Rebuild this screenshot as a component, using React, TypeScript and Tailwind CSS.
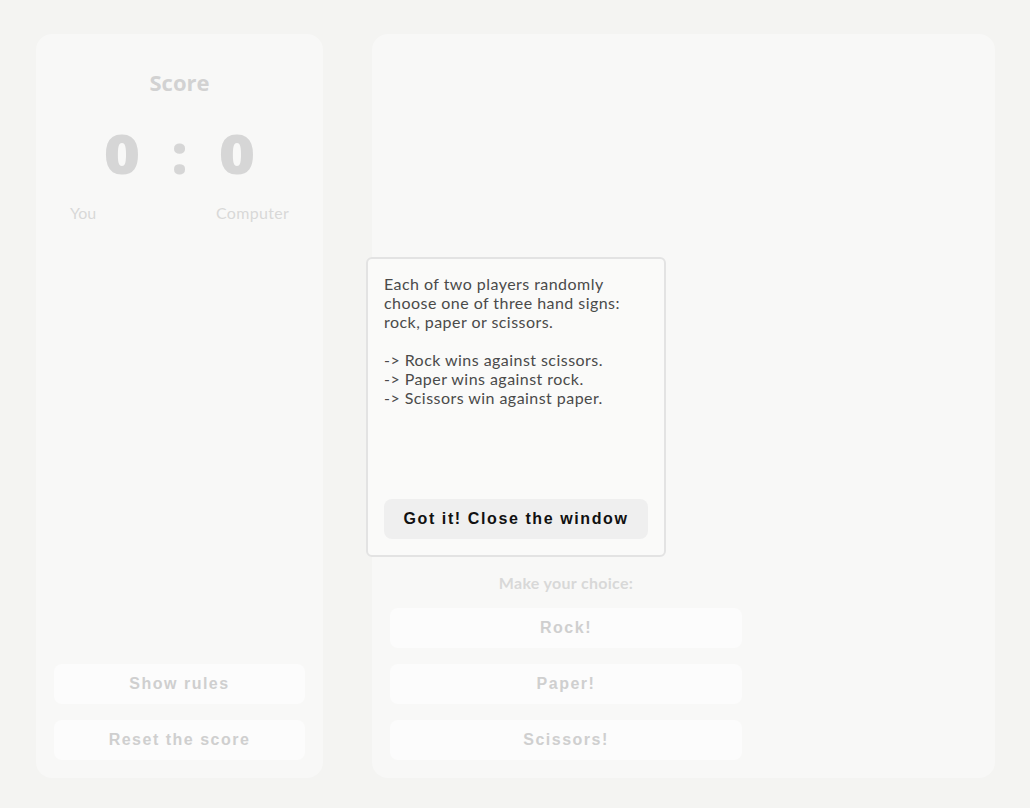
import React from "react";

const btnText = "font-['Liberation_Sans',Arial,sans-serif] font-bold text-[16px] tracking-[1.5px] text-[#cfcfcf]";

function GhostButton({ label }: { label: string }) {
  return (
    <div className={`h-10 rounded-lg bg-[#fcfcfc] flex items-center justify-center ${btnText}`}>
      {label}
    </div>
  );
}

export default function App() {
  return (
    <div className="relative w-[1030px] h-[808px] bg-[#f4f4f2] overflow-hidden">
      <div className="flex h-full pl-[36px] pr-[35px] pt-[34px] pb-[30px] gap-[49px]">
        {/* Left panel */}
        <div className="w-[287px] rounded-2xl bg-[#f8f8f7] flex flex-col px-[18px] pb-[18px]">
          <div className="pt-[34px] text-center font-['Open_Sans',sans-serif] font-bold text-[22px] leading-[28px] text-[#d2d2d2]">
            Score
          </div>
          <div className="mt-[22px] flex justify-center items-center gap-[34px] font-['Open_Sans',sans-serif] font-extrabold text-[54px] leading-[70px] text-[#d6d6d6]">
            <span className="inline-block scale-x-[1.15]">0</span>
            <span>:</span>
            <span className="inline-block scale-x-[1.15]">0</span>
          </div>
          <div className="mt-[15px] flex justify-between px-[16px] font-['Lato',sans-serif] text-[16px] leading-[20px] text-[#d8d8d8]">
            <span>You</span>
            <span className="tracking-[0.3px]">Computer</span>
          </div>
          <div className="mt-auto flex flex-col gap-4">
            <GhostButton label="Show rules" />
            <GhostButton label="Reset the score" />
          </div>
        </div>

        {/* Right panel */}
        <div className="flex-1 rounded-2xl bg-[#f8f8f7] flex flex-col justify-end px-[18px] pb-[18px]">
          <div className="w-[352px] flex flex-col gap-4">
            <div className="text-center font-['Lato',sans-serif] font-bold text-[16px] leading-[20px] tracking-[0.3px] text-[#d8d8d8] mb-[-1px]">
              Make your choice:
            </div>
            <GhostButton label="Rock!" />
            <GhostButton label="Paper!" />
            <GhostButton label="Scissors!" />
          </div>
        </div>
      </div>

      {/* Modal */}
      <div className="absolute left-[366px] top-[257px] w-[300px] h-[300px] rounded-md border-2 border-[#e3e3e3] bg-[#fafaf9] flex flex-col px-[16px] pt-[15px] pb-[16px]">
        <div className="font-['Lato',sans-serif] font-normal text-[16px] leading-[19px] tracking-[0.45px] text-[#4a4a4a]">
          <p>
            Each of two players randomly
            <br />
            choose one of three hand signs:
            <br />
            rock, paper or scissors.
          </p>
          <p className="mt-[19px]">-&gt; Rock wins against scissors.</p>
          <p>-&gt; Paper wins against rock.</p>
          <p>-&gt; Scissors win against paper.</p>
        </div>
        <div className="mt-auto h-10 rounded-lg bg-[#efefef] flex items-center justify-center font-['Liberation_Sans',Arial,sans-serif] font-bold text-[16px] tracking-[1.6px] text-[#111]">
          Got it! Close the window
        </div>
      </div>
    </div>
  );
}
